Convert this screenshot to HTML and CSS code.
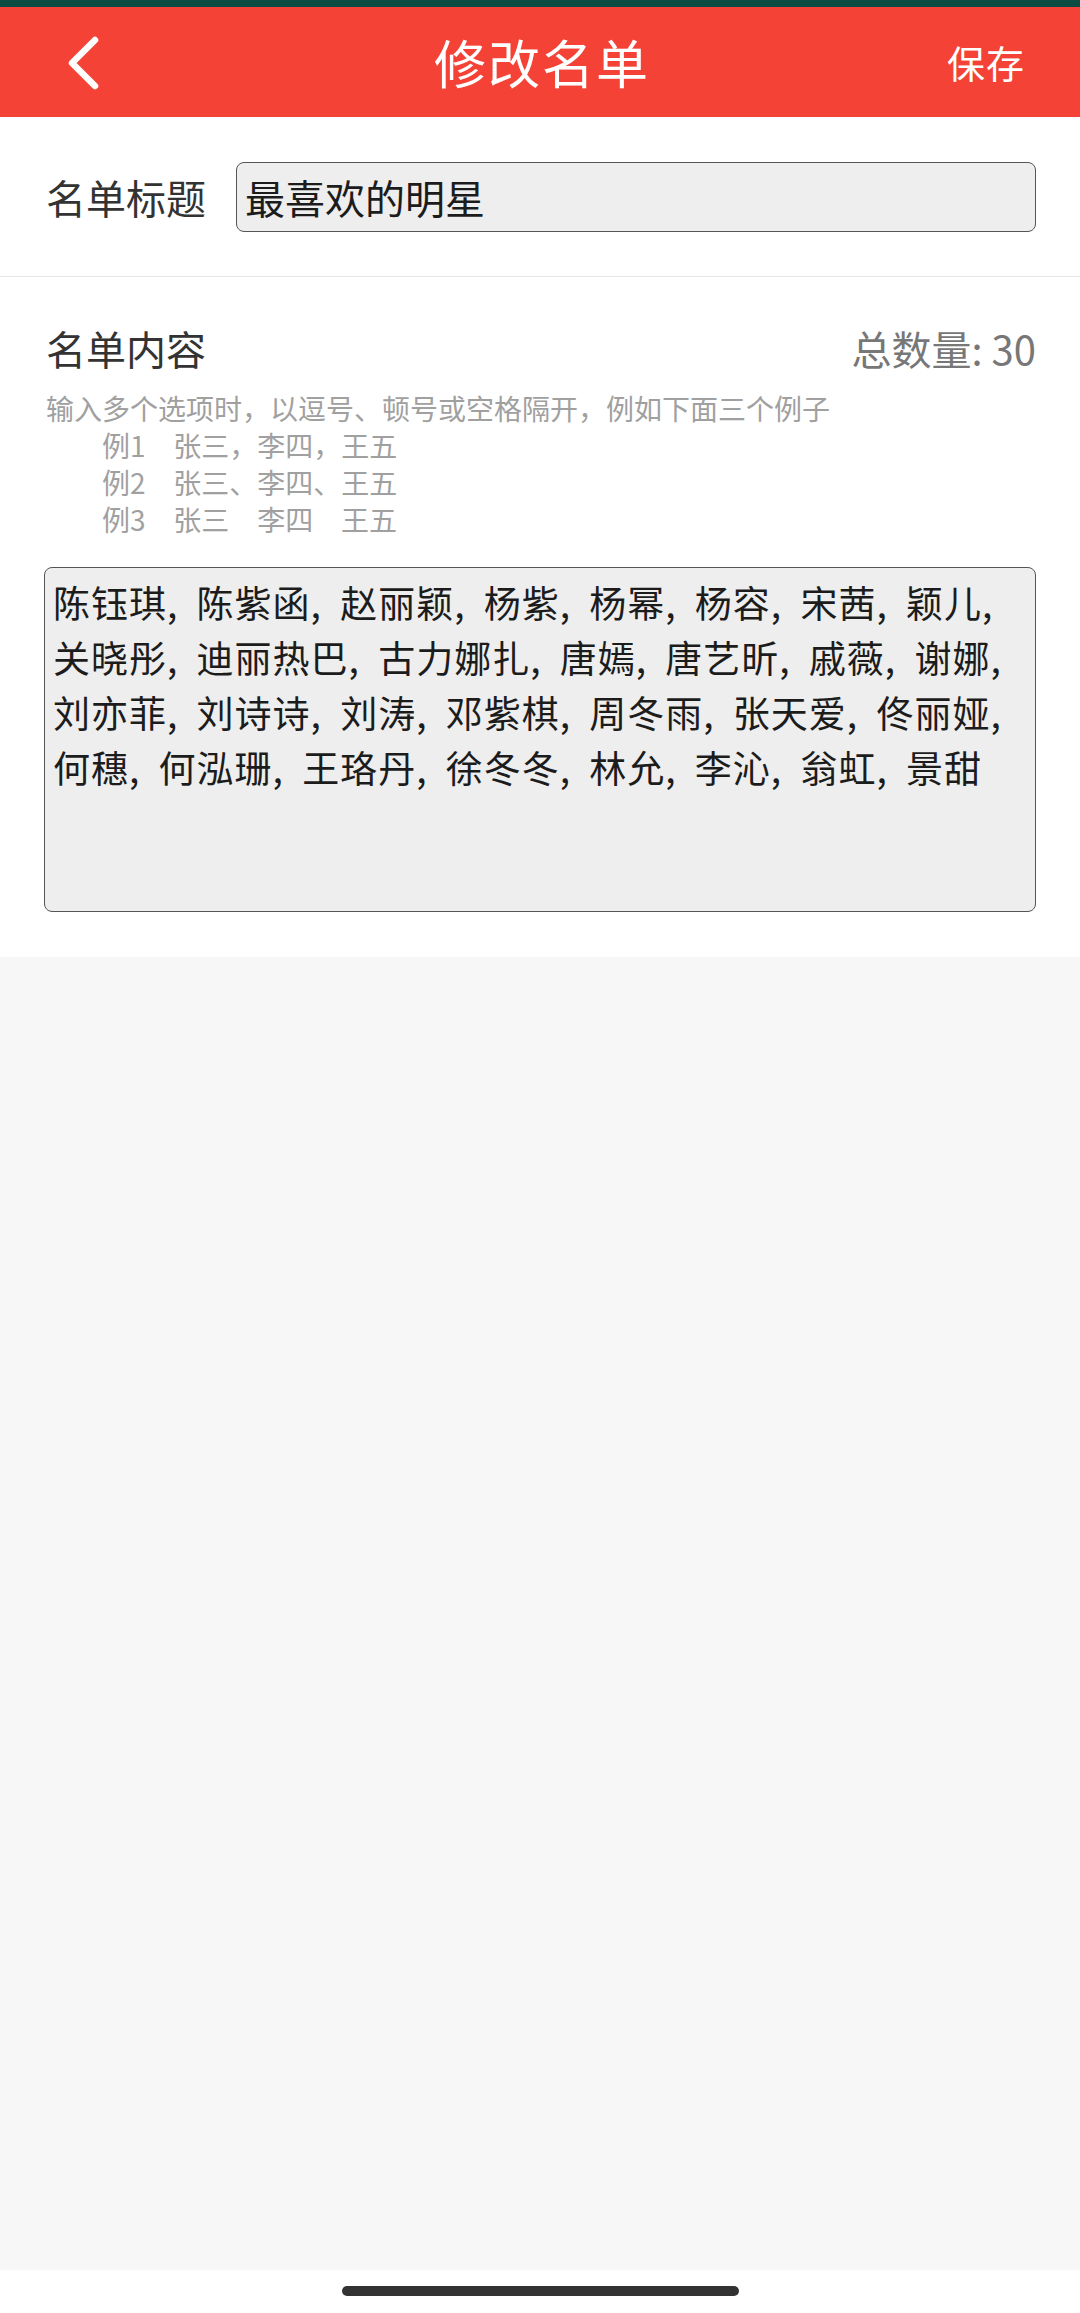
FILE: index.html
```html
<!DOCTYPE html>
<html lang="zh-CN">
<head>
<meta charset="utf-8">
<title>修改名单</title>
<link rel="stylesheet" href="styles.css">
</head>
<body>
<div class="app">
  <div class="statusbar"></div>
  <header class="topbar">
    <div class="topbar-left">
      <svg class="back" width="40" height="60" viewBox="0 0 40 60" aria-hidden="true">
        <polyline points="33,8 10,31 33,54" fill="none" stroke="#ffffff" stroke-width="6.5" stroke-linecap="round" stroke-linejoin="round"/>
      </svg>
    </div>
    <h1 class="topbar-title">修改名单</h1>
    <div class="topbar-right">保存</div>
  </header>

  <section class="title-row">
    <span class="label">名单标题</span>
    <div class="input">最喜欢的明星</div>
  </section>

  <section class="content">
    <div class="content-head">
      <span class="label">名单内容</span>
      <span class="count">总数量: 30</span>
    </div>
    <div class="help">
      <p class="help-line">输入多个选项时，以逗号、顿号或空格隔开，例如下面三个例子</p>
      <p class="help-line ex">例1   张三，李四，王五</p>
      <p class="help-line ex">例2   张三、李四、王五</p>
      <p class="help-line ex">例3   张三   李四   王五</p>
    </div>
    <div class="textarea">
      <div class="ta-line">陈钰琪, 陈紫函, 赵丽颖, 杨紫, 杨幂, 杨容, 宋茜, 颖儿,</div>
      <div class="ta-line">关晓彤, 迪丽热巴, 古力娜扎, 唐嫣, 唐艺昕, 戚薇, 谢娜,</div>
      <div class="ta-line">刘亦菲, 刘诗诗, 刘涛, 邓紫棋, 周冬雨, 张天爱, 佟丽娅,</div>
      <div class="ta-line">何穗, 何泓珊, 王珞丹, 徐冬冬, 林允, 李沁, 翁虹, 景甜</div>
    </div>
  </section>

  <div class="rest"></div>

  <div class="homebar"><span class="home-pill"></span></div>
</div>
</body>
</html>
```

FILE: styles.css
```css
* { box-sizing: border-box; }

html, body {
  margin: 0;
  padding: 0;
}

body {
  width: 1080px;
  height: 2313px;
  font-family: "Noto Sans CJK SC", "Noto Sans", sans-serif;
  color: #333333;
  background: #f7f7f7;
}

.app {
  display: flex;
  flex-direction: column;
  height: 2313px;
}

.statusbar {
  height: 7px;
  background: #0d4c43;
}

.topbar {
  height: 110px;
  background: #f44336;
  display: grid;
  grid-template-columns: 1fr auto 1fr;
  align-items: center;
  color: #ffffff;
}

.topbar-left {
  display: flex;
  align-items: center;
  padding-left: 62px;
}

.back { display: block; }

.topbar-title {
  margin: 0;
  font-size: 52px;
  font-weight: 400;
  letter-spacing: 2px;
  line-height: 60px;
  padding-left: 4px;
}

.topbar-right {
  justify-self: end;
  padding-right: 55px;
  font-size: 38px;
  line-height: 48px;
  letter-spacing: 1px;
}

.title-row {
  background: #ffffff;
  display: flex;
  align-items: center;
  gap: 30px;
  padding: 45px 44px 44px 46px;
  border-bottom: 1px solid #e6e6e6;
}

.label {
  font-size: 40px;
  line-height: 48px;
  color: #333333;
  white-space: nowrap;
}

.input {
  flex: 1;
  height: 70px;
  border: 1.5px solid #555555;
  border-radius: 8px;
  background: #eeeeee;
  padding: 0 8px;
  display: flex;
  align-items: center;
  font-size: 40px;
  color: #1c1c1c;
}

.content {
  background: #ffffff;
  padding: 47px 44px 45px 46px;
}

.content-head {
  display: flex;
  justify-content: space-between;
  align-items: center;
  height: 48px;
}

.count {
  font-size: 40px;
  line-height: 48px;
  color: #777777;
}

.help {
  margin-top: 18px;
}

.help-line {
  margin: 0;
  font-size: 28px;
  line-height: 37px;
  color: #a0a0a0;
  white-space: pre;
}

.help-line.ex {
  padding-left: 56px;
  word-spacing: 3px;
}

.textarea {
  margin-top: 29px;
  margin-left: -2px;
  height: 345px;
  border: 1.5px solid #555555;
  border-radius: 8px;
  background: #eeeeee;
  padding: 7px 8px 0 8px;
  color: #1c1c1c;
}

.ta-line {
  font-size: 37px;
  line-height: 55px;
  letter-spacing: 1px;
  word-spacing: 9px;
  white-space: nowrap;
}

.rest {
  flex: 1;
  background: #f7f7f7;
}

.homebar {
  height: 43px;
  background: #ffffff;
  display: flex;
  justify-content: center;
  padding-top: 16px;
}

.home-pill {
  width: 397px;
  height: 10px;
  border-radius: 5px;
  background: #333333;
}
```
